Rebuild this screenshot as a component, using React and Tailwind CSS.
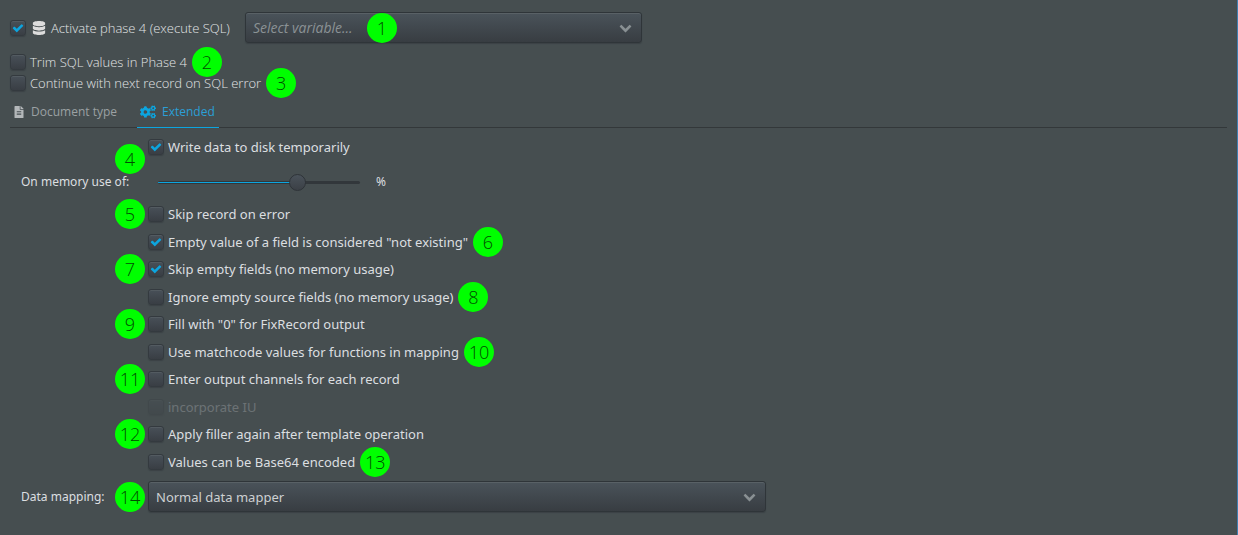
import { useState } from "react";
import { FaDatabase, FaFileAlt, FaCogs } from "react-icons/fa";

const OPTIONS = [
  { id: "skip-record", label: "Skip record on error", mark: 5, side: "left" },
  { id: "empty-value", label: 'Empty value of a field is considered "not existing"', mark: 6, side: "right", on: true },
  { id: "skip-empty", label: "Skip empty fields (no memory usage)", mark: 7, side: "left", on: true },
  { id: "ignore-empty", label: "Ignore empty source fields (no memory usage)", mark: 8, side: "right" },
  { id: "fill-zero", label: 'Fill with "0" for FixRecord output', mark: 9, side: "left" },
  { id: "matchcode", label: "Use matchcode values for functions in mapping", mark: 10, side: "right" },
  { id: "channels", label: "Enter output channels for each record", mark: 11, side: "left" },
  { id: "incorporate", label: "incorporate IU", disabled: true },
  { id: "filler", label: "Apply filler again after template operation", mark: 12, side: "left" },
  { id: "base64", label: "Values can be Base64 encoded", mark: 13, side: "right" },
];

function CheckIcon({ className }) {
  return (
    <svg viewBox="0 0 1792 1792" fill="currentColor" className={className}>
      <path d="M1671 566q0 40-28 68l-724 724-136 136q-28 28-68 28t-68-28l-136-136-362-362q-28-28-28-68t28-68l136-136q28-28 68-28t68 28l294 295 656-657q28-28 68-28t68 28l136 136q28 28 28 68z" />
    </svg>
  );
}

function ChevronIcon({ className }) {
  return (
    <svg viewBox="0 0 1792 1792" fill="currentColor" className={className}>
      <path d="M1683 808l-742 741q-19 19-45 19t-45-19l-742-741q-19-19-19-45.5t19-45.5l166-165q19-19 45-19t45 19l531 531 531-531q19-19 45-19t45 19l166 165q19 19 19 45.5t-19 45.5z" />
    </svg>
  );
}

function Mark({ n, className }) {
  return (
    <span
      className={`absolute z-10 grid size-[30px] place-items-center rounded-full bg-[#00ff00] font-['Open_Sans','Noto_Sans',sans-serif] text-lg font-light not-italic leading-none text-[#004d00] ${className}`}
    >
      {n}
    </span>
  );
}

function Check({ id, label, on = false, disabled = false, mark, side, icon }) {
  const [checked, setChecked] = useState(on);
  return (
    <div className={`relative flex w-fit items-center ${disabled ? "opacity-25" : ""}`}>
      <span className="relative grid size-4 shrink-0 place-items-center">
        <input
          id={id}
          type="checkbox"
          checked={checked}
          disabled={disabled}
          onChange={(e) => setChecked(e.target.checked)}
          className="size-4 appearance-none rounded-[3px] border border-[#343a3f] bg-linear-to-b from-[#485058] to-[#393e44] shadow-[inset_0_1px_0_#535b61,0_1px_1px_#3b4245]"
        />
        {checked && <CheckIcon className="pointer-events-none absolute size-3 text-[#0ca5df]" />}
      </span>
      {icon}
      <label htmlFor={id} className="pl-1 whitespace-nowrap">
        {label}
      </label>
      {mark && <Mark n={mark} className={side === "left" ? "right-full mr-[3px]" : "left-full ml-[5px]"} />}
    </div>
  );
}

function Select({ id, options, label, className = "", mark }) {
  return (
    <div className="relative flex w-full items-center">
      <select
        id={id}
        aria-label={label}
        className={`h-[31px] w-full appearance-none rounded-[3px] border border-[#2f3539] bg-linear-to-b from-[#4a535a] to-[#383d42] px-[7px] shadow-[inset_0_1px_0_#596166,0_1px_1px_#3b4245] ${className}`}
      >
        {options.map((o) => (
          <option key={o}>{o}</option>
        ))}
      </select>
      <ChevronIcon className="pointer-events-none absolute right-2.5 size-[13px] text-[#899093]" />
      {mark}
    </div>
  );
}

export default function App() {
  const [tab, setTab] = useState("extended");
  const [memory, setMemory] = useState(71);

  return (
    <main className="min-h-screen border-r border-[#3f7fb0] bg-[#464e50] pt-3 pr-2.5 pb-[22px] pl-2.5 font-['Noto_Sans','Open_Sans',sans-serif] text-[13px] leading-5 text-[#dcdfe0]">
      <div className="font-['Open_Sans','Noto_Sans',sans-serif] font-light text-[#e2e5e6]">
        <div className="flex items-center gap-[15px]">
          <Check
            id="phase4"
            label="Activate phase 4 (execute SQL)"
            on
            icon={<FaDatabase size={14} className="mr-px ml-1.5 text-[#dcdcdc]" />}
          />
          <div className="w-full max-w-[397px]">
            <Select
              id="variable"
              label="Variable"
              options={["Select variable..."]}
              className="text-sm font-normal text-[#8b9295] italic"
              mark={<Mark n={1} className="left-[122px]" />}
            />
          </div>
        </div>

        <div className="mt-[9px] flex flex-col gap-px">
          <Check id="trim" label="Trim SQL values in Phase 4" mark={2} side="right" />
          <Check id="continue" label="Continue with next record on SQL error" mark={3} side="right" />
        </div>
      </div>

      <div
        role="tablist"
        className="mt-[9px] flex gap-4 border-b border-[#33383a] font-['Open_Sans','Noto_Sans',sans-serif] text-xs leading-5"
      >
        {[
          { id: "document", label: "Document type", Icon: FaFileAlt, size: 12 },
          { id: "extended", label: "Extended", Icon: FaCogs, size: 16 },
        ].map(({ id, label, Icon, size }) => (
          <button
            key={id}
            role="tab"
            aria-selected={tab === id}
            onClick={() => setTab(id)}
            className={`-mb-px flex items-center gap-1.5 border-b pr-1 pb-[5px] pl-[3px] ${
              tab === id ? "border-[#0ca5df] text-[#2b9fd6]" : "border-transparent text-[#9ba1a3]"
            }`}
          >
            <Icon size={size} className={tab === id ? "text-[#0ca5df]" : "text-[#b4b8ba]"} />
            {label}
          </button>
        ))}
      </div>

      <div className="grid grid-cols-[138px_1fr] items-center pt-[9px]">
        <div className="relative col-start-2">
          <Check id="disk" label="Write data to disk temporarily" on />
          <Mark n={4} className="top-[7px] right-full mr-[3px]" />
        </div>

        <label htmlFor="memory" className="pt-[15px] pb-2 pl-[11px] text-xs leading-5">
          On memory use of:
        </label>
        <div className="flex items-center gap-4 pt-[15px] pb-2 pl-2.5">
          <div className="relative flex h-5 w-[202px] items-center">
            <div className="h-[3px] w-full overflow-hidden rounded-full bg-[#32373b]">
              <div className="h-px translate-y-px bg-[#0ca5df]" style={{ width: `${memory}%` }} />
            </div>
            <input
              id="memory"
              type="range"
              value={memory}
              onChange={(e) => setMemory(Number(e.target.value))}
              className="absolute w-full appearance-none bg-transparent [&::-webkit-slider-thumb]:size-[17px] [&::-webkit-slider-thumb]:appearance-none [&::-webkit-slider-thumb]:rounded-full [&::-webkit-slider-thumb]:border [&::-webkit-slider-thumb]:border-[#2e3338] [&::-webkit-slider-thumb]:bg-linear-to-b [&::-webkit-slider-thumb]:from-[#4a525a] [&::-webkit-slider-thumb]:to-[#3b4046]"
            />
          </div>
          <span className="text-xs leading-5">%</span>
        </div>

        <div className="col-start-2 flex flex-col">
          {OPTIONS.map((o) => (
            <div key={o.id} className="flex items-center odd:h-7 even:h-[27px]">
              <Check {...o} />
            </div>
          ))}
        </div>

        <label htmlFor="mapping" className="pt-1.5 pl-[11px] text-xs leading-5">
          Data mapping:
        </label>
        <div className="max-w-[618px] pt-1.5">
          <Select
            id="mapping"
            options={["Normal data mapper"]}
            className="text-[#cdd0d2]"
            mark={<Mark n={14} className="right-full mr-[3px]" />}
          />
        </div>
      </div>
    </main>
  );
}
